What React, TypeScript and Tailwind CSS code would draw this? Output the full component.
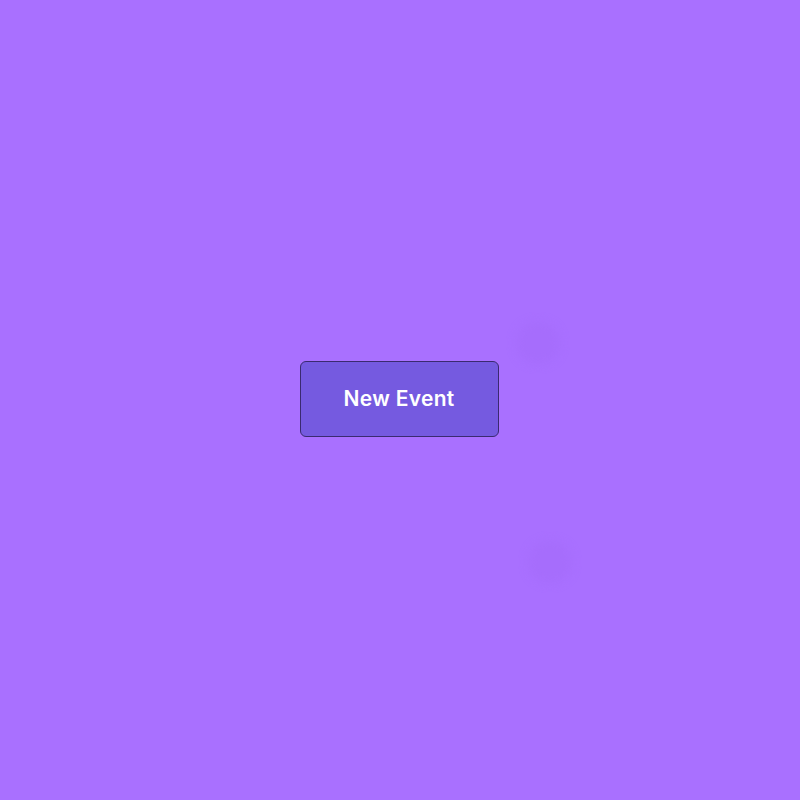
import React from "react";

export default function App() {
  return (
    <div className="relative w-full h-[800px] bg-[#a970ff] flex items-center justify-center overflow-hidden" style={{ fontFamily: "Inter, 'Noto Sans', sans-serif" }}>
      <div className="absolute left-[516px] top-[322px] w-[44px] h-[42px] rounded-full bg-[#a66dfc] blur-[4px]" />
      <div className="absolute left-[528px] top-[541px] w-[44px] h-[42px] rounded-full bg-[#a66dfc] blur-[4px]" />
      <button className="mr-[2px] mb-[2px] w-[199px] h-[76px] rounded-[6px] border-[1.5px] border-[#3a2a70] bg-[#755ae0] text-white text-[21px] font-semibold tracking-[0.3px]">
        New Event
      </button>
    </div>
  );
}
